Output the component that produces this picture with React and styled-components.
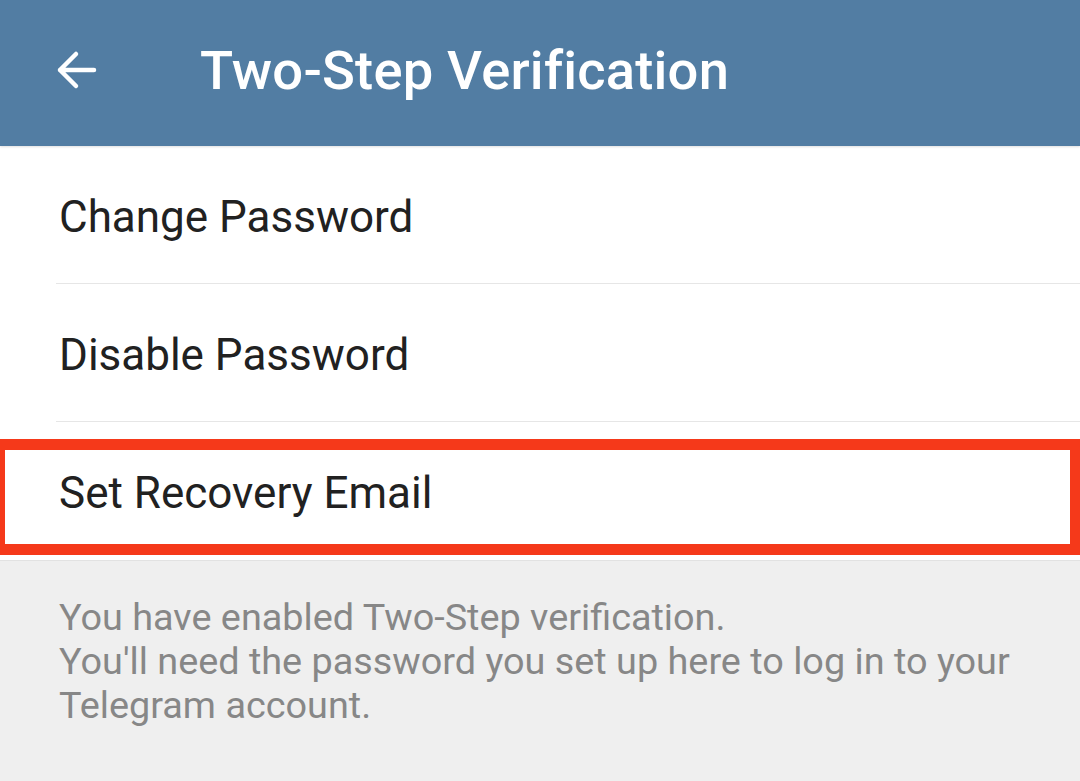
import styled, { createGlobalStyle } from "styled-components";

const GlobalStyle = createGlobalStyle`
  html, body {
    margin: 0;
    padding: 0;
    background: #efefef;
  }
  body {
    font-family: Roboto, "Noto Sans", "Liberation Sans", sans-serif;
  }
`;

const rows = [
  { id: "change", label: "Change Password" },
  { id: "disable", label: "Disable Password" },
  { id: "recovery", label: "Set Recovery Email", marked: true },
];

function BackArrow() {
  return (
    <svg width="48" height="48" viewBox="0 0 48 48" fill="none">
      <path
        d="M42 24H8M24 8L8 24l16 16"
        stroke="#ffffff"
        strokeWidth="4.5"
        strokeLinecap="round"
        strokeLinejoin="round"
      />
    </svg>
  );
}

export default function App() {
  return (
    <Screen>
      <GlobalStyle />
      <Toolbar>
        <BackButton aria-label="Back">
          <BackArrow />
        </BackButton>
        <Title>Two-Step Verification</Title>
      </Toolbar>
      <List>
        {rows.map((row, i) => (
          <Row key={row.id} $last={i === rows.length - 1}>
            <RowLabel>{row.label}</RowLabel>
            {row.marked && <Highlight />}
          </Row>
        ))}
      </List>
      <Info>
        You have enabled Two-Step verification.
        <br />
        You'll need the password you set up here to log in to your Telegram
        account.
      </Info>
    </Screen>
  );
}

const Screen = styled.div`
  display: flex;
  flex-direction: column;
  min-height: 100vh;
  background: #efefef;
`;

const Toolbar = styled.header`
  display: flex;
  align-items: center;
  height: 146px;
  padding-left: 52px;
  background: #527da3;
  box-shadow: 0 1px 2px rgba(0, 0, 0, 0.12);
  position: relative;
  z-index: 1;
`;

const BackButton = styled.div`
  display: flex;
  align-items: center;
  justify-content: center;
  width: 48px;
  height: 48px;
  margin-top: -6px;
`;

const Title = styled.h1`
  margin: -6px 0 0 100px;
  color: #ffffff;
  font-size: 54.3px;
  font-weight: 500;
  letter-spacing: 0.2px;
`;

const List = styled.div`
  display: flex;
  flex-direction: column;
  background: #ffffff;
  border-bottom: 1px solid #e2e2e2;
`;

const Row = styled.div`
  position: relative;
  display: flex;
  align-items: center;
  height: 138px;
  padding-left: 59px;
  box-sizing: border-box;

  &::after {
    content: "";
    display: ${(p) => (p.$last ? "none" : "block")};
    position: absolute;
    left: 56px;
    right: 0;
    bottom: 0;
    height: 1px;
    background: #e6e6e6;
  }
`;

const RowLabel = styled.span`
  color: #212121;
  font-size: 44px;
  margin-top: 4px;
`;

const Highlight = styled.div`
  position: absolute;
  top: 17px;
  bottom: 5px;
  left: -6px;
  right: -1px;
  border: 11px solid #f5391a;
  pointer-events: none;
`;

const Info = styled.p`
  margin: 0;
  padding: 34px 40px 0 59px;
  color: #878787;
  font-size: 37.8px;
  line-height: 44px;
`;
